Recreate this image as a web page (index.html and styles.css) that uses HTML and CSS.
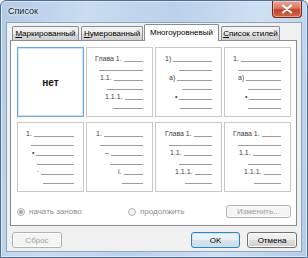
FILE: index.html
```html
<!DOCTYPE html>
<html lang="ru">
<head>
<meta charset="utf-8">
<title>Список</title>
<link rel="stylesheet" href="styles.css">
</head>
<body>
<div class="window">
  <div class="titlebar">
    <span class="title">Список</span>
    <span class="close"><svg width="12" height="10" viewBox="0 0 12 10"><path d="M2 1.5 L10 8.5 M10 1.5 L2 8.5" stroke="#fff" stroke-width="2.2" stroke-linecap="round"/></svg></span>
  </div>
  <div class="client">
    <div class="tabs">
      <div class="tab t1"><u>М</u>аркированный</div>
      <div class="tab t2"><u>Н</u>умерованный</div>
      <div class="tab t3 active">Многоуровневый</div>
      <div class="tab t4"><u>С</u>писок стилей</div>
    </div>
    <div class="panel">
      <div class="gallery">
        <div class="cell sel"><span class="none">нет</span></div>
        <div class="cell">
          <div class="row i9"><span class="lbl">Глава 1.</span><span class="ln"></span></div>
          <div class="row i13"><span class="ln"></span></div>
          <div class="row i14"><span class="lbl">1.1.</span><span class="ln"></span></div>
          <div class="row i21"><span class="ln"></span></div>
          <div class="row i19"><span class="lbl">1.1.1.</span><span class="ln"></span></div>
          <div class="row i27"><span class="ln"></span></div>
        </div>
        <div class="cell">
          <div class="row i10"><span class="lbl">1)</span><span class="ln"></span></div>
          <div class="row i24"><span class="ln"></span></div>
          <div class="row i14"><span class="lbl">a)</span><span class="ln"></span></div>
          <div class="row i27"><span class="ln"></span></div>
          <div class="row i20"><span class="lbl bul">•</span><span class="ln"></span></div>
          <div class="row i25"><span class="ln"></span></div>
        </div>
        <div class="cell">
          <div class="row i9"><span class="lbl">1.</span><span class="ln"></span></div>
          <div class="row i14"><span class="ln"></span></div>
          <div class="row i14"><span class="lbl">a)</span><span class="ln"></span></div>
          <div class="row i24"><span class="ln"></span></div>
          <div class="row i21"><span class="lbl bul">•</span><span class="ln"></span></div>
          <div class="row i24"><span class="ln"></span></div>
        </div>
        <div class="cell">
          <div class="row i9"><span class="lbl">1.</span><span class="ln"></span></div>
          <div class="row i14"><span class="ln"></span></div>
          <div class="row i15"><span class="lbl bul">•</span><span class="ln"></span></div>
          <div class="row i20"><span class="ln"></span></div>
          <div class="row i20"><span class="lbl sub">◦</span><span class="ln"></span></div>
          <div class="row i26"><span class="ln"></span></div>
        </div>
        <div class="cell">
          <div class="row i10"><span class="lbl">1.</span><span class="ln"></span></div>
          <div class="row i14"><span class="ln"></span></div>
          <div class="row i19"><span class="lbl">–</span><span class="ln"></span></div>
          <div class="row i24"><span class="ln"></span></div>
          <div class="row i32"><span class="lbl">i.</span><span class="ln"></span></div>
          <div class="row i36"><span class="ln"></span></div>
        </div>
        <div class="cell">
          <div class="row i10"><span class="lbl">Глава 1.</span><span class="ln"></span></div>
          <div class="row i14"><span class="ln"></span></div>
          <div class="row i15"><span class="lbl">1.1.</span><span class="ln"></span></div>
          <div class="row i24"><span class="ln"></span></div>
          <div class="row i20"><span class="lbl">1.1.1.</span><span class="ln"></span></div>
          <div class="row i30"><span class="ln"></span></div>
        </div>
        <div class="cell">
          <div class="row i9"><span class="lbl">Глава 1.</span><span class="ln"></span></div>
          <div class="row i14"><span class="ln"></span></div>
          <div class="row i15"><span class="lbl">1.1.</span><span class="ln"></span></div>
          <div class="row i24"><span class="ln"></span></div>
          <div class="row i20"><span class="lbl">1.1.1.</span><span class="ln"></span></div>
          <div class="row i30"><span class="ln"></span></div>
        </div>
      </div>
      <div class="options">
        <span class="radio first"><span class="dot on"></span>начать заново</span>
        <span class="radio"><span class="dot"></span>продолжить</span>
        <span class="btn edit">Изменить...</span>
      </div>
    </div>
    <div class="footer">
      <span class="btn reset">Сброс</span>
      <span class="btn ok">OK</span>
      <span class="btn cancel">Отмена</span>
    </div>
  </div>
</div>
</body>
</html>
```

FILE: styles.css
```css
html, body {
  margin: 0;
  padding: 0;
  background: #ffffff;
}
body {
  font-family: "Liberation Sans", Arial, sans-serif;
  font-size: 9px;
  color: #000;
}
.window {
  width: 308px;
  height: 258px;
  box-sizing: border-box;
  display: flex;
  flex-direction: column;
  border: 1px solid #4f6e93;
  border-radius: 6px 6px 0 0;
  background: linear-gradient(100deg, #b3cbe6 0%, #c9dcf0 25%, #bad1ea 50%, #cfe0f2 75%, #b3cbe6 100%);
  box-shadow: inset 0 0 0 1px #dbe8f6;
}
.titlebar {
  height: 21px;
  display: flex;
  align-items: flex-start;
  padding-left: 7px;
}
.title {
  margin-top: 5px;
  font-size: 9px;
  color: #0c1a2b;
  text-shadow: 0 0 4px #fff, 0 0 2px #fff;
}
.close {
  margin-left: auto;
  margin-right: 5px;
  width: 30px;
  height: 17px;
  box-sizing: border-box;
  display: flex;
  align-items: center;
  justify-content: center;
  border: 1px solid #6e2a1f;
  border-top: none;
  border-radius: 0 0 4px 4px;
  background: linear-gradient(180deg, #e9a99a 0%, #d9775f 45%, #c3422a 55%, #d4664c 100%);
  box-shadow: inset 0 0 0 1px rgba(255, 220, 210, 0.5);
}
.client {
  flex: 1;
  margin: 0 5px 5px 5px;
  border: 1px solid #8ea5bf;
  background: #f0f0f0;
  display: flex;
  flex-direction: column;
  padding: 1px 4px 0 3px;
}
.tabs {
  height: 16px;
  display: flex;
  align-items: flex-end;
  padding-left: 2px;
}
.tab {
  height: 14px;
  box-sizing: border-box;
  border: 1px solid #898c95;
  border-bottom: none;
  border-radius: 2px 2px 0 0;
  background: linear-gradient(180deg, #f3f3f3 0%, #ebebeb 50%, #dcdcdc 51%, #cfcfcf 100%);
  display: flex;
  align-items: center;
  justify-content: center;
  font-size: 8px;
  white-space: nowrap;
  overflow: hidden;
  color: #000;
}
.tab u {
  text-decoration: underline;
}
.t1 { width: 67px; }
.t2 { width: 62px; margin-left: 2px; }
.t3 { width: 75px; margin-left: 1px; }
.t4 { width: 59px; margin-left: 2px; }
.tab.active {
  height: 17px;
  margin-bottom: -1px;
  background: #ffffff;
  position: relative;
  z-index: 1;
  padding-bottom: 1px;
}
.panel {
  height: 186px;
  box-sizing: border-box;
  border: 1px solid #898c95;
  background: #ffffff;
  padding: 6px 5px 0 6px;
  display: flex;
  flex-direction: column;
}
.gallery {
  display: grid;
  grid-template-columns: repeat(4, 67px);
  grid-template-rows: 70px 70px;
  column-gap: 2px;
  row-gap: 5px;
}
.cell {
  box-sizing: border-box;
  border: 1px solid #c8c8c8;
  background: #fff;
  padding: 4px 9px 0 0;
  display: flex;
  flex-direction: column;
}
.cell.sel {
  border: 1px solid #6aa6e6;
  box-shadow: inset 0 0 0 1px #cfe4fa;
  align-items: center;
  justify-content: center;
  padding: 0;
}
.none {
  font-weight: bold;
  font-size: 10px;
  color: #111;
}
.row {
  height: 9.5px;
  display: flex;
  align-items: flex-end;
}
.lbl {
  font-size: 7px;
  line-height: 7px;
  color: #404040;
  margin-right: 2px;
  white-space: nowrap;
}
.lbl.sub {
  font-size: 5px;
  line-height: 8px;
}
.ln {
  flex: 1;
  height: 1px;
  background: #9c9c9c;
}
.i9 { padding-left: 8px; }
.i10 { padding-left: 9px; }
.i13 { padding-left: 12px; }
.i14 { padding-left: 13px; }
.i15 { padding-left: 14px; }
.i19 { padding-left: 18px; }
.i20 { padding-left: 19px; }
.i21 { padding-left: 20px; }
.i24 { padding-left: 23px; }
.i25 { padding-left: 24px; }
.i26 { padding-left: 25px; }
.i27 { padding-left: 26px; }
.i30 { padding-left: 29px; }
.i32 { padding-left: 31px; }
.i36 { padding-left: 35px; }
.options {
  margin-top: 13px;
  height: 13px;
  display: flex;
  align-items: center;
}
.radio {
  display: flex;
  align-items: center;
  color: #8d8d8d;
  font-size: 8px;
}
.radio.first {
  width: 111px;
}
.dot {
  width: 8px;
  height: 8px;
  box-sizing: border-box;
  border: 1px solid #b4b4b4;
  border-radius: 50%;
  background: #f2f2f2;
  margin-right: 4px;
  display: flex;
  align-items: center;
  justify-content: center;
}
.dot.on::after {
  content: "";
  width: 4px;
  height: 4px;
  border-radius: 50%;
  background: #a9a9a9;
}
.btn {
  box-sizing: border-box;
  display: flex;
  align-items: center;
  justify-content: center;
  border: 1px solid #707070;
  border-radius: 3px;
  background: linear-gradient(180deg, #f2f2f2 0%, #ebebeb 50%, #dddddd 51%, #cfcfcf 100%);
  box-shadow: inset 0 0 0 1px #fcfcfc;
  font-size: 8px;
  color: #000;
}
.edit {
  margin-left: auto;
  width: 65px;
  height: 13px;
  border-color: #adb2b5;
  background: #f4f4f4;
  color: #a0a0a0;
}
.footer {
  margin-top: 6px;
  height: 16px;
  display: flex;
  align-items: stretch;
}
.reset {
  margin-left: 2px;
  width: 50px;
  border-color: #adb2b5;
  background: #f4f4f4;
  color: #a0a0a0;
}
.ok {
  margin-left: auto;
  width: 49px;
  border-color: #3c7fb1;
  box-shadow: inset 0 0 0 1px #c5e6f8;
  background: linear-gradient(180deg, #f0f6fa 0%, #e6eff5 50%, #d6e4ee 51%, #cddce6 100%);
}
.cancel {
  margin-left: 7px;
  width: 50px;
}
```
